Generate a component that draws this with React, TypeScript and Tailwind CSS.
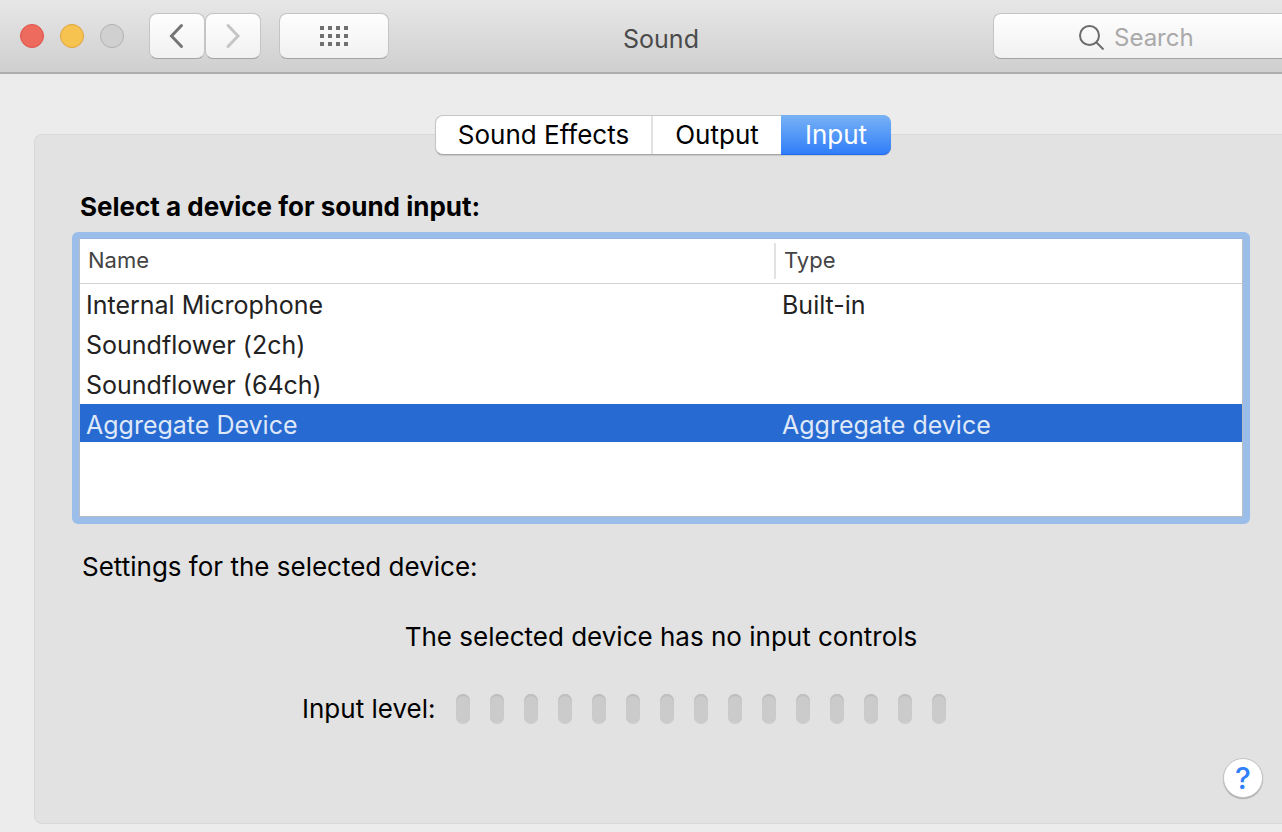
import React from "react";

type Device = { name: string; type: string };

const devices: Device[] = [
  { name: "Internal Microphone", type: "Built-in" },
  { name: "Soundflower (2ch)", type: "" },
  { name: "Soundflower (64ch)", type: "" },
  { name: "Aggregate Device", type: "Aggregate device" },
];

const LEVEL_STEPS = 15;

const toolbarButton =
  "flex h-[46px] items-center justify-center rounded-lg border border-[#c4c4c4] border-b-[#a3a3a3] bg-linear-to-b from-[#fefefe] to-[#f1f1f1]";

function TitleBar() {
  return (
    <header className="grid h-[74px] grid-cols-[1fr_auto_1fr] items-center border-b-2 border-[#adadad] bg-linear-to-b from-[#e7e7e7] to-[#cfcfcf] pl-5">
      <div className="flex items-center">
        <div className="flex gap-4">
          <button aria-label="Close" className="size-6 rounded-full border border-[#dd5349] bg-[#ed6a5f]" />
          <button aria-label="Minimize" className="size-6 rounded-full border border-[#dfa33b] bg-[#f6c351]" />
          <button aria-label="Zoom" disabled className="size-6 rounded-full border border-[#b1b1b1] bg-[#d0d0d0]" />
        </div>
        <nav className="ml-[25px] flex">
          <button aria-label="Back" className={`${toolbarButton} w-14`}>
            <svg width="16" height="26" viewBox="0 0 16 26" fill="none" stroke="#757575" strokeWidth="3" strokeLinecap="round">
              <path d="M12.500 2.500 2.500 13 12.500 23.500" />
            </svg>
          </button>
          <button aria-label="Forward" disabled className={`${toolbarButton} w-14`}>
            <svg width="16" height="26" viewBox="0 0 16 26" fill="none" stroke="#c5c5c5" strokeWidth="3" strokeLinecap="round">
              <path d="M3 2.500 13 13 3 23.500" />
            </svg>
          </button>
        </nav>
        <button aria-label="Show all" className={`${toolbarButton} ml-[18px] w-[110px]`}>
          <svg width="28" height="20" viewBox="0 0 28 20" fill="#6f6f6f">
            {[0, 8, 16].map((y) =>
              [0, 8, 16, 24].map((x) => <rect key={`${x}-${y}`} x={x} y={y} width="4" height="4" />)
            )}
          </svg>
        </button>
      </div>
      <h1 className="pt-[6px] pl-5 text-[25px] leading-8 text-[#4a4a4a]">Sound</h1>
      <label className="flex h-[46px] w-[289px] items-center gap-[9px] justify-self-end rounded-l-lg border border-r-0 border-[#c4c4c4] border-b-[#a3a3a3] bg-linear-to-b from-[#fefefe] to-[#f1f1f1] pt-[3px] pl-[85px]">
        <svg className="shrink-0" width="26" height="26" viewBox="0 0 26 26" fill="none" stroke="#6c6c6c" strokeWidth="2">
          <circle cx="10.500" cy="10.500" r="9.500" />
          <path d="m17 17 7.500 7.500" />
        </svg>
        <input
          type="search"
          aria-label="Search"
          placeholder="Search"
          className="min-w-0 flex-1 bg-transparent text-[24px] outline-none placeholder:text-[#a9a9a9]"
        />
      </label>
    </header>
  );
}

function Tabs() {
  return (
    <div
      role="tablist"
      className="-mt-5 ml-1 flex h-10 self-center rounded-lg border border-[#c6c6c6] border-b-[#a6a6a6] bg-white shadow-[0_1px_1px_rgba(0,0,0,0.12)]"
    >
      <button role="tab" aria-selected="false" className="w-[217px] border-r-2 border-[#e2e2e2]">
        Sound Effects
      </button>
      <button role="tab" aria-selected="false" className="w-32">
        Output
      </button>
      <button
        role="tab"
        aria-selected="true"
        className="-my-px -mr-px w-[110px] rounded-r-lg border-b border-[#2067f0] bg-linear-to-b from-[#78b2f5] to-[#2f7df8] text-white"
      >
        Input
      </button>
    </div>
  );
}

function DeviceTable() {
  return (
    <div className="mt-[9px] rounded-md border-[7px] border-t-[6px] border-[#9abde9] bg-[#9abde9]">
      <div className="min-h-[279px] border border-[#b9bcc0] border-t-[#93b4de] bg-white">
        <table className="w-full table-fixed border-separate border-spacing-0 text-left text-[25px]">
          <thead>
            <tr className="h-[45px] text-[22px] text-[#444444]">
              <th scope="col" className="w-[694px] border-b border-[#d2d2d2] p-0 pb-[2px] pl-2 font-normal">
                Name
              </th>
              <th scope="col" className="border-b border-[#d2d2d2] p-0 font-normal">
                <div className="flex h-9 items-center border-l-2 border-[#e2e2e2] pb-[2px] pl-2">Type</div>
              </th>
            </tr>
          </thead>
          <tbody>
            {devices.map((device, i) => {
              const selected = i === devices.length - 1;
              return (
                <tr
                  key={device.name}
                  aria-selected={selected}
                  className={`leading-[34px] ${selected ? "bg-[#276ad2] text-[#dfe8f8]" : "text-[#222222]"}`}
                >
                  <td className="border-b-2 border-white p-0 pt-1 pl-[6px]">{device.name}</td>
                  <td className="border-b-2 border-white p-0 pt-1 pl-2">{device.type}</td>
                </tr>
              );
            })}
          </tbody>
        </table>
      </div>
    </div>
  );
}

function LevelMeter() {
  return (
    <div className="mt-10 ml-[230px] flex items-center">
      <span id="level-label">Input level:</span>
      <div
        role="meter"
        aria-labelledby="level-label"
        aria-valuemin={0}
        aria-valuemax={LEVEL_STEPS}
        aria-valuenow={0}
        className="ml-[21px] flex gap-5"
      >
        {Array.from({ length: LEVEL_STEPS }, (_, i) => (
          <span key={i} className="h-[30px] w-[14px] rounded-full bg-[#cbcbcb] shadow-[inset_0_2px_1px_#bdbdbd]" />
        ))}
      </div>
    </div>
  );
}

export default function App() {
  return (
    <div className="min-h-screen bg-[#ececec] font-['Inter',sans-serif] text-[26px] leading-8 text-black">
      <TitleBar />
      <main className="pt-[60px] pb-2 pl-[34px]">
        <section className="flex flex-col rounded-l-lg border border-r-0 border-[#d8d8d8] bg-[#e2e2e2] pr-8 pb-[25px] pl-[37px]">
          <Tabs />
          <h2 className="mt-9 pl-2 font-bold">Select a device for sound input:</h2>
          <DeviceTable />
          <p className="mt-[27px] pl-[10px]">Settings for the selected device:</p>
          <p className="mt-[38px] text-center">The selected device has no input controls</p>
          <LevelMeter />
          <button
            aria-label="Help"
            className="mt-[33px] -mr-[13px] flex size-10 items-center justify-center self-end rounded-full border border-[#c4c4c4] bg-white text-[30px] font-medium text-[#2f80fb] shadow-[0_1px_1px_rgba(0,0,0,0.25)]"
          >
            ?
          </button>
        </section>
      </main>
    </div>
  );
}
